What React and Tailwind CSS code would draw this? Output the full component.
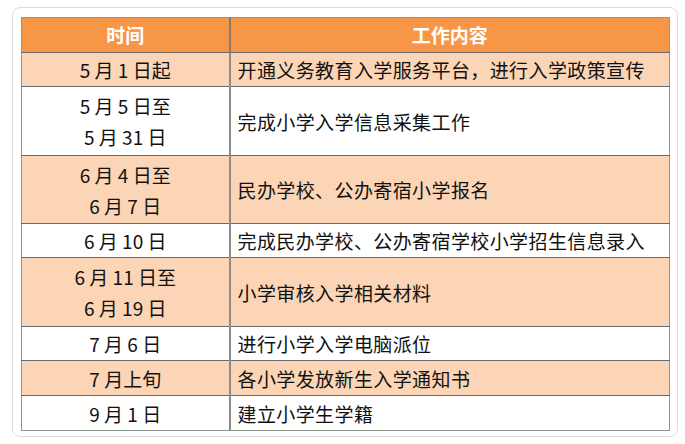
import React from "react";

const rows = [
  { date: ["5 月 1 日起"], task: "开通义务教育入学服务平台，进行入学政策宣传", shade: true, h: "h-[34px]" },
  { date: ["5 月 5 日至", "5 月 31 日"], task: "完成小学入学信息采集工作", shade: false, h: "h-[69px]" },
  { date: ["6 月 4 日至", "6 月 7 日"], task: "民办学校、公办寄宿小学报名", shade: true, h: "h-[68px]" },
  { date: ["6 月 10 日"], task: "完成民办学校、公办寄宿学校小学招生信息录入", shade: false, h: "h-[34px]" },
  { date: ["6 月 11 日至", "6 月 19 日"], task: "小学审核入学相关材料", shade: true, h: "h-[69px]" },
  { date: ["7 月 6 日"], task: "进行小学入学电脑派位", shade: false, h: "h-[34px]" },
  { date: ["7 月上旬"], task: "各小学发放新生入学通知书", shade: true, h: "h-[35px]" },
  { date: ["9 月 1 日"], task: "建立小学生学籍", shade: false, h: "h-[35px]" },
];

const App = () => {
  return (
    <div className="bg-white w-[685px] h-[444px] pt-[7px] pl-[12px] font-['Noto_Sans_CJK_SC',sans-serif]">
      <div className="w-[666px] h-[430px] border border-[#dcdcdc] rounded-lg pt-[9px] pl-[8px]">
        <table className="w-[649px] border-collapse border border-[#8c9a8c] text-[19px] text-[#111]">
          <thead>
            <tr className="bg-[#f79646] text-white font-bold">
              <th className="w-[208px] h-[35px] p-0 border-r-2 border-[#8a7a6a] font-bold">时间</th>
              <th className="h-[35px] p-0 font-bold">工作内容</th>
            </tr>
          </thead>
          <tbody>
            {rows.map((row, i) => (
              <tr
                key={i}
                className={`${row.shade ? "bg-[#fbd5b5]" : "bg-white"} border-t border-[#6b6b6b]`}
              >
                <td className={`${row.h} p-0 text-center leading-[31px] border-r-2 border-[#8c8c8c]`}>
                  {row.date.map((d) => (
                    <div key={d}>{d}</div>
                  ))}
                </td>
                <td className="p-0 pl-[7px] leading-[31px] tracking-[0.4px] whitespace-nowrap">{row.task}</td>
              </tr>
            ))}
          </tbody>
        </table>
      </div>
    </div>
  );
};

export default App;
